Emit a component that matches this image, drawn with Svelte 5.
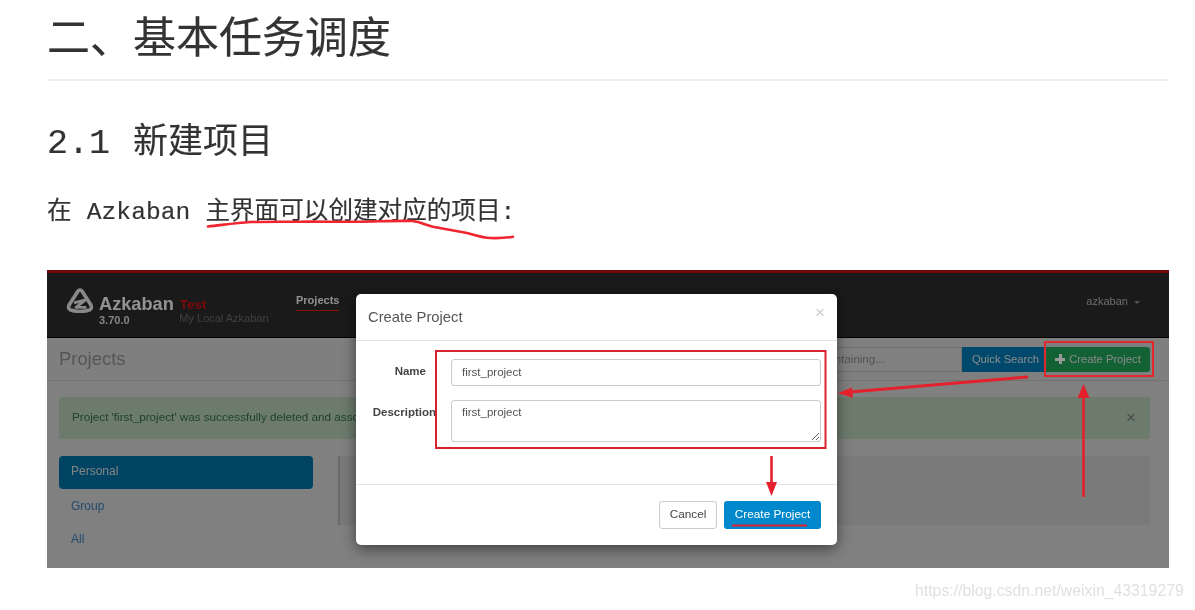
<script>
  const personalNav = ['Group', 'All'];
</script>

<div class="page">
  <h1>二、基本任务调度</h1>
  <h2>2.1 新建项目</h2>
  <p class="lead">在 Azkaban 主界面可以创建对应的项目:</p>

  <section class="shot">
    <header class="topbar">
      <div class="brand">
        <svg class="logo" viewBox="0 0 28 26" width="28" height="26" aria-hidden="true">
          <path d="M14 3 C13 3 12.400 3.500 11.900 4.300 L3.400 17.500 C2 20 2.400 22.200 4.600 23 C10 24.800 18 24.800 23.400 23 C25.600 22.200 26 20 24.600 17.500 L16.100 4.300 C15.600 3.500 15 3 14 3 Z" fill="none" stroke="#e4e4e4" stroke-width="3.600" stroke-linejoin="round"/>
          <path d="M8 15.800 L19.500 12.800 L10 20.300 L20.300 20.300" fill="none" stroke="#e4e4e4" stroke-width="2.800" stroke-linejoin="round"/>
        </svg>
        <div class="brand-name">
          <strong>Azkaban</strong>
          <small>3.70.0</small>
        </div>
        <div class="brand-env">
          <strong>Test</strong>
          <small>My Local Azkaban</small>
        </div>
      </div>
      <nav class="topnav"><a href="#projects">Projects</a></nav>
      <div class="user">azkaban <span class="caret"></span></div>
    </header>

    <div class="subhead">
      <div class="title">Projects</div>
      <div class="actions">
        <input class="search" placeholder="Project names containing..." />
        <button class="quick">Quick Search</button>
        <button class="create"><span class="plus"></span>Create Project</button>
      </div>
    </div>

    <div class="content">
      <div class="alert">
        <span class="alert-text">Project 'first_project' was successfully deleted and associated flows and schedules removed.</span>
        <span class="alert-x">×</span>
      </div>
      <div class="columns">
        <ul class="side">
          <li class="active">Personal</li>
          {#each personalNav as item}
            <li>{item}</li>
          {/each}
        </ul>
        <div class="panel"></div>
      </div>
    </div>

    <div class="backdrop"></div>

    <div class="modal">
      <div class="modal-head">
        <span>Create Project</span>
        <span class="modal-x">×</span>
      </div>
      <div class="modal-body">
        <div class="row">
          <label class="short" for="pname">Name</label>
          <input id="pname" value="first_project" />
        </div>
        <div class="row">
          <label for="pdesc">Description</label>
          <textarea id="pdesc">first_project</textarea>
        </div>
      </div>
      <div class="modal-foot">
        <button class="cancel">Cancel</button>
        <button class="confirm">Create Project</button>
      </div>
    </div>
  </section>

  <svg class="marks" viewBox="0 0 1195 610" width="1195" height="610" aria-hidden="true">
    <path d="M208 226.500 C222 225 236 223 250 222 C270 221.500 285 221.800 300 221.700 C320 221.500 340 222 360 221.700 C380 221.400 400 220.500 413 221 C420 222 426 225 433 226.700 C445 229 456 231 467 233 C475 235 482 238 490 238 C498 238.300 506 238 513 236.700" fill="none" stroke="#ef2530" stroke-width="2.600" stroke-linecap="round"/>
    <rect x="436" y="351" width="389.500" height="97" fill="none" stroke="#d8232f" stroke-width="2"/>
    <rect x="1045" y="342" width="108" height="34" fill="none" stroke="#e2272f" stroke-width="2"/>
    <path d="M1027 377 L850 392" stroke="#e4202c" stroke-width="3" fill="none" stroke-linecap="round"/>
    <path d="M838 393 L852 387.500 L853 398 Z" fill="#e4202c"/>
    <path d="M1083.500 497 L1083.500 396" stroke="#e4202c" stroke-width="2.600" fill="none"/>
    <path d="M1083.500 384 L1089.500 398 L1077.500 398 Z" fill="#e4202c"/>
    <path d="M771.500 456 L771.500 484" stroke="#e4202c" stroke-width="2.600" fill="none"/>
    <path d="M771.500 496 L766 482 L777 482 Z" fill="#e4202c"/>
    <path d="M732 525.500 L807 525.500" stroke="#e4202c" stroke-width="2.200" fill="none"/>
  </svg>

  <div class="watermark">https://blog.csdn.net/weixin_43319279</div>
</div>

<style>
  :global(body) {
    margin: 0;
    background: #fff;
  }

  .page {
    position: relative;
    width: 1195px;
    height: 610px;
    overflow: hidden;
    box-sizing: border-box;
    padding: 0 26px 0 47px;
    color: #333;
    font-family: "Liberation Mono", "Noto Sans CJK SC", monospace;
  }

  h1,
  h2,
  .lead {
    filter: blur(0.35px);
    -webkit-text-stroke: 0.15px #333;
  }

  h1 {
    margin: 0;
    padding: 20px 0 15px;
    border-bottom: 2px solid #eee;
    font-size: 43px;
    line-height: 44px;
    font-weight: 400;
  }

  h2 {
    margin: 45px 0 0;
    font-size: 35px;
    line-height: 36px;
    font-weight: 400;
    word-spacing: 2px;
  }

  .lead {
    margin: 35.500px 0 0;
    font-size: 24.600px;
    line-height: 30px;
    word-spacing: 0.500px;
  }

  .shot {
    position: relative;
    margin-top: 42.500px;
    height: 298px;
    overflow: hidden;
    background: #d5d5d5;
    font-family: "Liberation Sans", Arial, sans-serif;
    font-size: 12px;
    color: #333;
    filter: blur(0.4px);
  }

  .topbar {
    display: flex;
    align-items: flex-start;
    height: 64px;
    border-top: 3px solid #b81010;
    border-bottom: 1px solid #000;
    background: #2c2c2c;
    box-sizing: content-box;
  }

  .brand {
    display: flex;
    margin-left: 19px;
    padding-top: 14px;
    width: 230px;
  }

  .logo {
    flex: none;
    margin-right: 5px;
  }

  .brand-name,
  .brand-env {
    display: flex;
    flex-direction: column;
  }

  .brand-name strong {
    font-size: 18.200px;
    line-height: 24px;
    margin-top: 5px;
    color: #f4f4f4;
  }

  .brand-name small {
    font-size: 11px;
    line-height: 11px;
    font-weight: 700;
    color: #ddd;
    margin-top: -1px;
  }

  .brand-env {
    margin-left: 5.500px;
  }

  .brand-env strong {
    font-size: 13.500px;
    line-height: 15px;
    margin-top: 10px;
    margin-left: 0.500px;
    color: #cc1010;
  }

  .brand-env small {
    font-size: 11px;
    line-height: 14px;
    color: #6c6c6c;
    margin-top: -1px;
  }

  .topnav a {
    display: block;
    margin-top: 21px;
    padding-bottom: 3px;
    font-size: 11px;
    line-height: 13px;
    font-weight: 700;
    color: #eee;
    text-decoration: none;
    border-bottom: 1px solid #e81818;
  }

  .user {
    margin: 21px 0 0 auto;
    padding-right: 29px;
    font-size: 11px;
    line-height: 14px;
    color: #b4b4b4;
  }

  .caret {
    display: inline-block;
    margin-left: 3px;
    vertical-align: middle;
    border-top: 3px solid #888;
    border-left: 3px solid transparent;
    border-right: 3px solid transparent;
  }

  .subhead {
    display: flex;
    align-items: center;
    justify-content: space-between;
    height: 42px;
    padding: 0 19px 0 12px;
    background: #d4d4d4;
    border-bottom: 1px solid #c0c0c0;
  }

  .title {
    font-size: 18.400px;
    color: #8e8e8e;
  }

  .actions {
    display: flex;
    align-items: center;
    height: 25px;
  }

  .search {
    box-sizing: border-box;
    width: 227px;
    height: 25px;
    border: 1px solid #bbb;
    padding: 0 10px;
    background: #d5d5d5;
    font: 11.500px "Liberation Sans", Arial, sans-serif;
  }

  .search::placeholder {
    color: #8c8c8c;
    opacity: 1;
  }

  .quick,
  .create {
    height: 25px;
    border: 0;
    padding: 0;
    color: #e4e4e4;
    font: 11.200px "Liberation Sans", Arial, sans-serif;
  }

  .quick {
    width: 83px;
    padding-left: 4px;
    background: #0078b4;
  }

  .create {
    display: flex;
    align-items: center;
    justify-content: center;
    gap: 4px;
    width: 104px;
    margin-left: 1px;
    border-radius: 0 3px 3px 0;
    background: #1fa35a;
  }

  .plus {
    width: 10px;
    height: 10px;
    background:
      linear-gradient(#fff, #fff) center / 100% 3px no-repeat,
      linear-gradient(#fff, #fff) center / 3px 100% no-repeat;
  }

  .content {
    padding: 16px 19px 0 12px;
  }

  .alert {
    display: flex;
    align-items: center;
    justify-content: space-between;
    height: 42px;
    padding: 0 13px;
    border-radius: 3px;
    background: #b4cdb4;
    color: #33703f;
    font-size: 11.700px;
    white-space: nowrap;
  }

  .alert-text {
    line-height: 14px;
    margin-top: -3px;
  }

  .alert-x {
    font-size: 17px;
    color: #7c7c7c;
    margin-right: 1px;
  }

  .columns {
    display: flex;
    gap: 25px;
    margin-top: 17px;
  }

  .side {
    flex: none;
    width: 254px;
    margin: 0;
    padding: 0;
    list-style: none;
    color: #3c7db4;
    font-size: 12px;
  }

  .side li {
    height: 33px;
    line-height: 33px;
    padding-left: 12px;
    border-radius: 4px;
  }

  .side li.active {
    margin-bottom: 1px;
    background: #0070a6;
    color: #ddd;
    line-height: 30px;
  }

  .panel {
    flex: 1;
    height: 69px;
    border-left: 2px solid #b0b0b0;
    background: #cccccc;
  }

  .backdrop {
    position: absolute;
    inset: 0;
    background: rgba(0, 0, 0, 0.4);
  }

  .modal {
    position: absolute;
    left: 309px;
    top: 24px;
    width: 481px;
    height: 251px;
    display: flex;
    flex-direction: column;
    background: #fff;
    border-radius: 5px;
    box-shadow: 0 4px 14px rgba(0, 0, 0, 0.5);
  }

  .modal-head {
    display: flex;
    justify-content: space-between;
    height: 47px;
    box-sizing: border-box;
    padding: 15px 12px 0;
    border-bottom: 1px solid #e5e5e5;
    font-size: 14.800px;
    line-height: 17px;
    color: #555;
  }

  .modal-x {
    font-size: 17px;
    line-height: 10px;
    color: #ccc;
    margin: -1px 0 0;
  }

  .modal-body {
    flex: 1;
    display: flex;
    flex-direction: column;
    gap: 14px;
    padding: 18px 16px 0 0;
  }

  .row {
    display: flex;
    gap: 15px;
  }

  label {
    flex: none;
    width: 80px;
    padding-top: 5px;
    text-align: right;
    font-size: 11.500px;
    font-weight: 700;
    line-height: 14px;
    color: #444;
  }

  label.short {
    box-sizing: border-box;
    padding-right: 10px;
  }

  .modal-body input,
  .modal-body textarea {
    flex: 1;
    min-width: 0;
    box-sizing: border-box;
    margin: 0;
    padding: 3px 10px;
    border: 1px solid #ccc;
    border-radius: 3px;
    background: #fff;
    color: #555;
    font: 11.500px/16px "Liberation Sans", Arial, sans-serif;
  }

  .modal-body input {
    height: 27px;
    padding-bottom: 5px;
  }

  .modal-body textarea {
    height: 42px;
  }

  .modal-foot {
    display: flex;
    justify-content: flex-end;
    gap: 7px;
    height: 61px;
    box-sizing: border-box;
    padding: 16px 16px 0;
    border-top: 1px solid #e5e5e5;
  }

  .modal-foot button {
    height: 28px;
    padding: 0 0 2px;
    border-radius: 3px;
    font: 11.800px "Liberation Sans", Arial, sans-serif;
  }

  .cancel {
    width: 58px;
    border: 1px solid #ccc;
    background: #fff;
    color: #444;
  }

  .confirm {
    width: 97px;
    border: 0;
    background: #0088cc;
    color: #fff;
  }

  .marks {
    position: absolute;
    left: 0;
    top: 0;
    pointer-events: none;
    filter: blur(0.3px);
  }

  .watermark {
    position: absolute;
    left: 915px;
    top: 582px;
    font-family: "Liberation Sans", Arial, sans-serif;
    font-size: 15.800px;
    line-height: 18px;
    color: #e0e0e0;
    white-space: nowrap;
    filter: blur(0.3px);
  }
</style>
